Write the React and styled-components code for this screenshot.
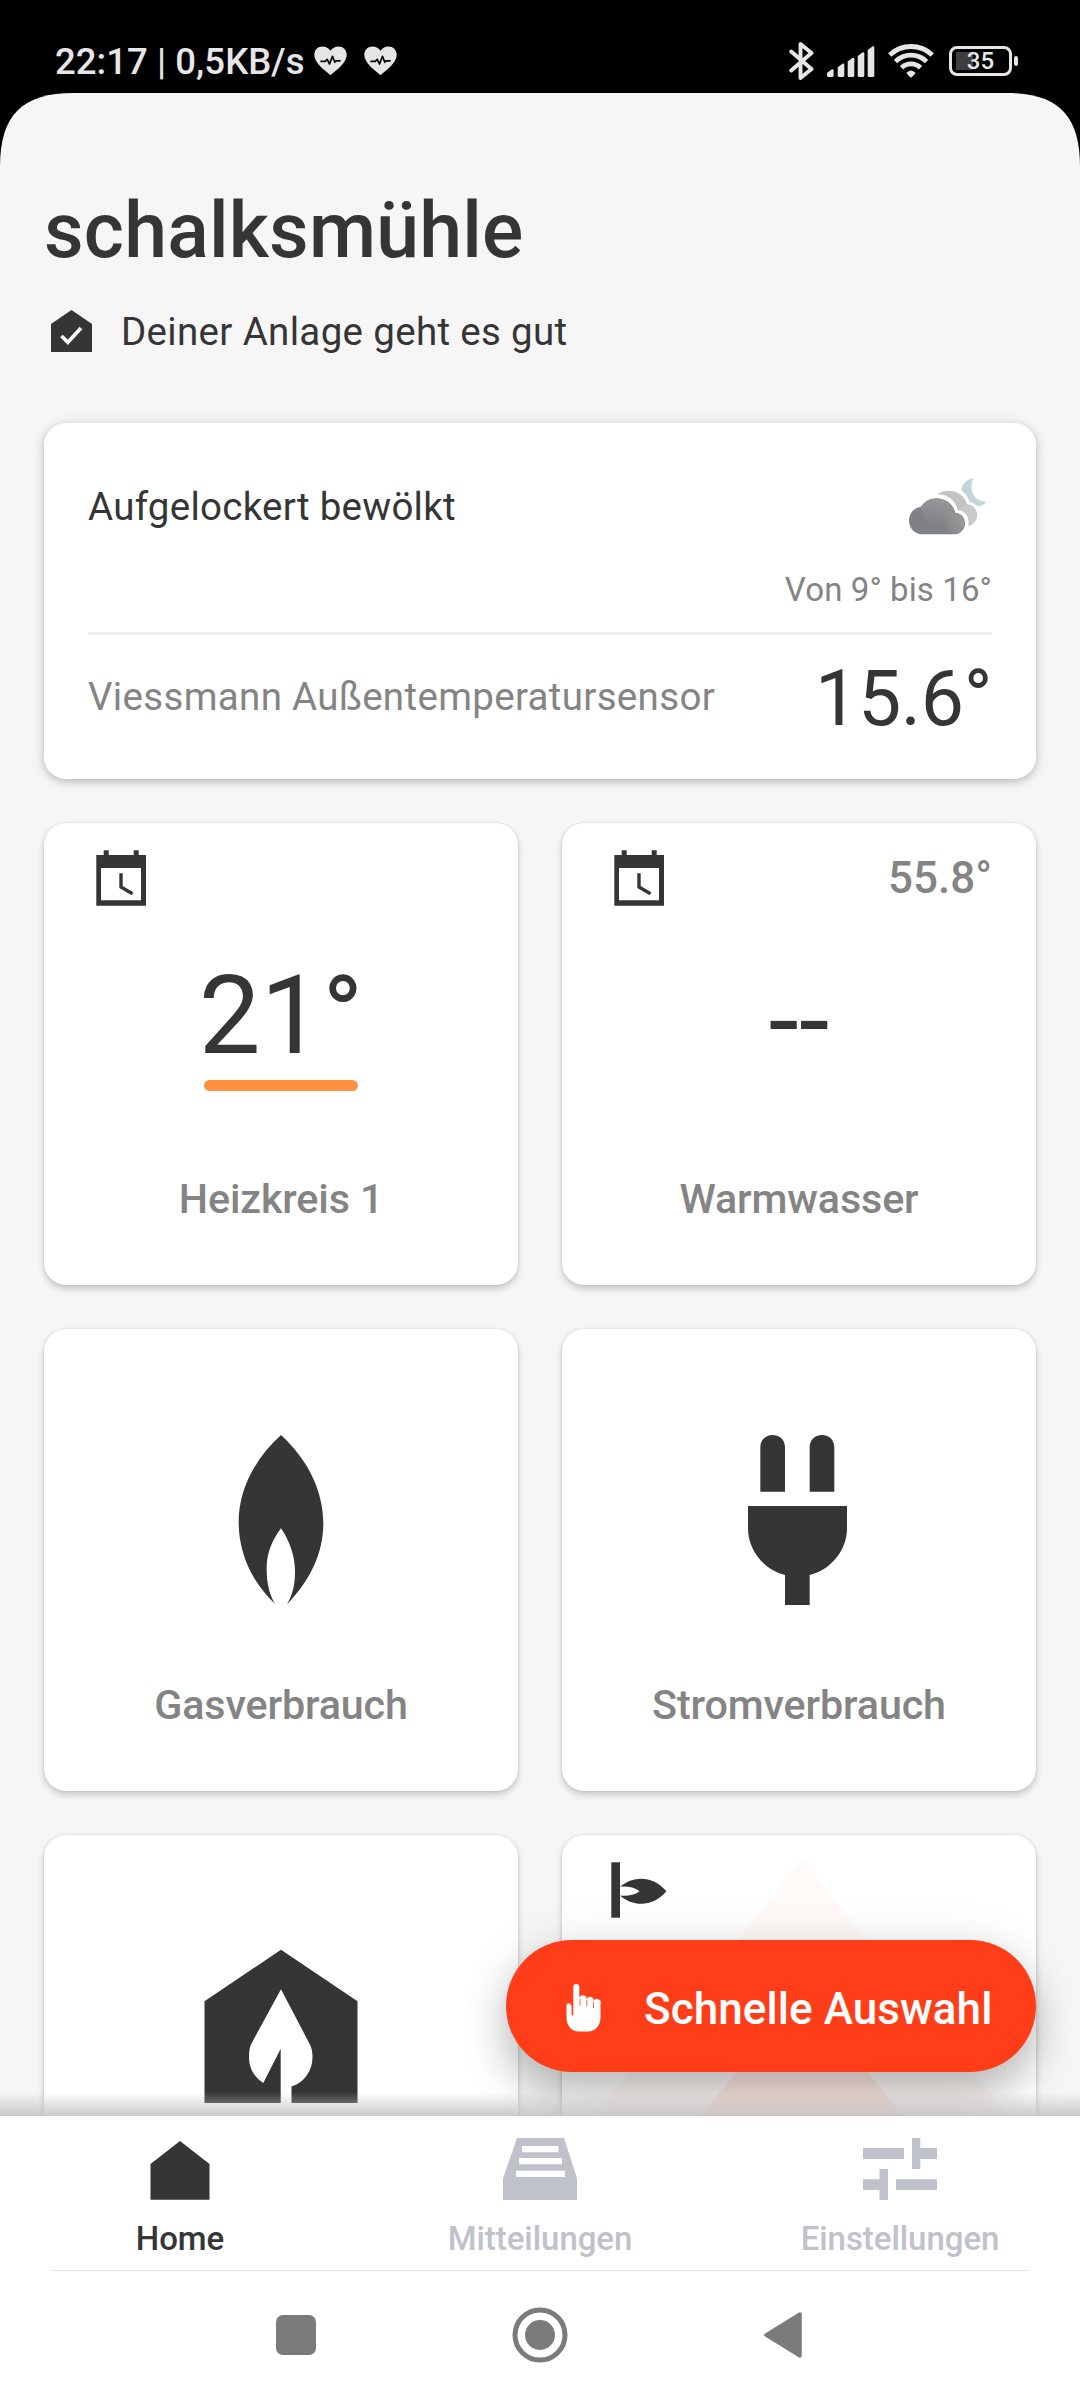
import React from "react";
import styled, { createGlobalStyle } from "styled-components";

const GlobalStyle = createGlobalStyle`
  *, *::before, *::after { box-sizing: border-box; }
  html, body { margin: 0; padding: 0; background: #000; }
  body { font-family: Roboto, "Noto Sans", sans-serif; color: #353535; }
  svg { display: block; flex: none; }
`;

const Screen = styled.div`
  position: relative;
  display: flex;
  flex-direction: column;
  width: 1080px;
  height: 2400px;
  overflow: hidden;
  background: #000;
`;

const StatusBar = styled.header`
  display: flex;
  justify-content: space-between;
  height: 93px;
  padding: 32px 62px 0 55px;
  color: #e6e6e6;
`;

const StatusGroup = styled.div`
  display: flex;
  align-items: center;
  height: 58px;
`;

const Clock = styled.span`
  font-size: 36.5px;
  font-weight: 500;
  line-height: 58px;
  letter-spacing: 0.06px;
  padding-top: 2px;
  margin-right: 9px;
  white-space: nowrap;
`;

const Hearts = styled.div`
  display: flex;
  gap: 17px;
`;

const Battery = styled.div`
  display: flex;
  align-items: center;
  gap: 2px;
  margin-left: 15px;
`;

const BatteryBody = styled.div`
  display: flex;
  align-items: center;
  justify-content: center;
  width: 63px;
  height: 30px;
  border: 3px solid #e6e6e6;
  border-radius: 8px;
  font-size: 24px;
  font-weight: 500;
  line-height: 24px;
  background: linear-gradient(#3e3e3e, #3e3e3e) 4px center / 17px 18px no-repeat;
`;

const BatteryTip = styled.div`
  width: 4px;
  height: 10px;
  border-radius: 2px;
  background: #e6e6e6;
`;

const Content = styled.main`
  position: relative;
  height: 2023px;
  overflow: hidden;
  padding: 93px 44px 0;
  background: #f6f6f6;
  clip-path: path("M0 74 C0 22 22 0 74 0 H1006 C1058 0 1080 22 1080 74 V2023 H0 Z");
`;

const Title = styled.h1`
  margin: 0;
  font-size: 77px;
  font-weight: 500;
  line-height: 90px;
  letter-spacing: 0.2px;
`;

const Health = styled.div`
  display: flex;
  align-items: center;
  gap: 29px;
  height: 50px;
  margin: 30px 0 67px;
  padding-left: 7px;
  font-size: 38.5px;
  letter-spacing: 0.33px;
`;

const HealthText = styled.span`
  padding-top: 1px;
`;

const Card = styled.section`
  border-radius: 22px;
  background: #fff;
  box-shadow: ${(p) =>
    p.$raised
      ? "0 1px 14px rgba(0,0,0,.12), 0 3px 7px rgba(0,0,0,.16)"
      : "0 0 3px rgba(0,0,0,.12), 0 4px 7px rgba(0,0,0,.18)"};
`;

const WeatherCard = styled(Card)`
  height: 356px;
  padding: 44px 44px 0;
`;

const WeatherNow = styled.div`
  display: flex;
  align-items: center;
  justify-content: space-between;
  height: 79px;
  padding-right: 5px;
  font-size: 38.5px;
  letter-spacing: 0.26px;
`;

const WeatherRange = styled.div`
  margin-top: 24px;
  font-size: 33px;
  line-height: 40px;
  letter-spacing: 0.1px;
  text-align: right;
  color: #848484;
`;

const Divider = styled.hr`
  height: 3px;
  margin: 22px 0 0;
  border: 0;
  background: #eee;
`;

const SensorRow = styled.div`
  display: flex;
  align-items: center;
  justify-content: space-between;
  height: 126px;
`;

const SensorName = styled.span`
  margin-bottom: 3px;
  font-size: 38.5px;
  letter-spacing: 0.33px;
  color: #848484;
`;

const SensorValue = styled.span`
  padding-top: 2px;
  font-size: 77px;
  line-height: 90px;
  letter-spacing: -0.4px;
`;

const Tiles = styled.div`
  display: grid;
  grid-template-columns: 474px 474px;
  grid-auto-rows: 462px;
  gap: 44px;
  margin-top: 44px;
`;

const Tile = styled(Card)`
  position: relative;
  display: flex;
  flex-direction: column;
`;

const TileHead = styled.div`
  position: relative;
  display: flex;
  align-items: center;
  justify-content: space-between;
  height: 88px;
  margin-bottom: 18px;
  padding: 22px 44px 0;
`;

const TileReading = styled.span`
  font-size: 44px;
  font-weight: 500;
  color: #848484;
`;

const TileBody = styled.div`
  display: flex;
  flex-direction: column;
  align-items: center;
  justify-content: center;
  height: 170px;
`;

const BigValue = styled.div`
  font-size: 110px;
  line-height: 120px;
  margin-top: ${(p) => (p.$alone ? "14px" : "19px")};
`;

const Underline = styled.div`
  width: 154px;
  height: 11px;
  margin-top: 4px;
  border-radius: 6px;
  background: #ff9141;
`;

const TileLabel = styled.div`
  margin-top: 76px;
  font-size: 41.25px;
  font-weight: 500;
  line-height: 48px;
  letter-spacing: -0.13px;
  text-align: center;
  color: #848484;
`;

const Watermark = styled.svg`
  position: absolute;
  left: 0;
  top: 0;
`;

const QuickButton = styled.button`
  position: absolute;
  left: 506px;
  top: 1940px;
  display: flex;
  align-items: center;
  width: 530px;
  height: 132px;
  padding: 4px 0 0 60px;
  border: 0;
  border-radius: 66px;
  background: #ff3e19;
  color: #fff;
  font: 500 44px/56px Roboto, "Noto Sans", sans-serif;
  white-space: nowrap;
  box-shadow: 0 26px 44px rgba(0, 0, 0, 0.22), 0 2px 48px rgba(0, 0, 0, 0.1);
`;

const QuickLabel = styled.span`
  margin-left: 42px;
  padding-top: 2px;
  letter-spacing: 0.08px;
`;

const BottomFade = styled.div`
  position: absolute;
  left: 0;
  right: 0;
  top: 2092px;
  height: 24px;
  background: linear-gradient(rgba(190, 190, 190, 0), rgba(190, 190, 190, 0.8));
`;

const Tabs = styled.nav`
  position: relative;
  display: grid;
  grid-template-columns: repeat(3, 1fr);
  height: 155px;
  background: #fff;

  &::after {
    content: "";
    position: absolute;
    left: 52px;
    right: 52px;
    bottom: 0;
    height: 1px;
    background: #e2e2e2;
  }
`;

const Tab = styled.div`
  display: flex;
  flex-direction: column;
  align-items: center;
  padding-top: 22px;
  font-size: 33px;
  font-weight: 500;
  line-height: 40px;
  letter-spacing: -0.05px;
  color: ${(p) => (p.$active ? "#353535" : "#bfc2ca")};

  svg { margin-bottom: 15px; }
`;

const SystemNav = styled.footer`
  display: flex;
  align-items: center;
  justify-content: center;
  height: 129px;
  gap: 196px;
  padding: 0 3px 2px 0;
  background: #fff;
`;

const HeartIcon = () => (
  <svg width="33" height="30" viewBox="0 0 33 30">
    <path d="M16.5 29.3 C10 23.5 .3 17 .3 8.8 C.3 4 4 .6 8.6 .6 C12 .6 14.7 2.3 16.5 4.8 C18.3 2.3 21 .6 24.4 .6 C29 .6 32.7 4 32.7 8.8 C32.7 17 23 23.5 16.5 29.3Z" fill="#e6e6e6" />
    <path d="M7 15.3 H11.5 L13.2 13.3 L15.5 18 L18.5 10.3 L20.8 16.3 L22 14.8 H26" fill="none" stroke="#000" strokeWidth="1.7" strokeLinejoin="round" strokeLinecap="round" />
  </svg>
);

const BluetoothIcon = () => (
  <svg width="25" height="40" viewBox="0 0 25 40">
    <path d="M2.2 10.5 L22.5 28 L11.5 37 V3 L22.5 12 L2.2 29.5" fill="none" stroke="#e6e6e6" strokeWidth="3.9" strokeLinejoin="round" strokeLinecap="round" />
  </svg>
);

const bars = [
  [0, 23], [10.7, 17.3], [20.7, 11.5], [30.7, 6], [40.7, 0],
];

const SignalSvg = styled.svg`
  margin-left: 13px;
`;

const SignalIcon = () => (
  <SignalSvg width="48" height="31" viewBox="0 0 48 31">
    {bars.map(([x, y]) => (
      <path key={x} d={`M${x} ${y + 4} L${x + 5} ${y + 0.3} Q${x + 6.6} ${y} ${x + 6.6} ${y + 1.5} V29.5 Q${x + 6.6} 31 ${x + 5} 31 H${x + 1.5} Q${x} 31 ${x} 29.5Z`} fill="#e6e6e6" />
    ))}
  </SignalSvg>
);

const WifiIcon = () => (
  <SignalSvg width="46" height="34" viewBox="0 0 46 34">
    <g fill="none" stroke="#e6e6e6" strokeWidth="4.8">
      <path d="M1.7 11 A31 31 0 0 1 44.3 11" />
      <path d="M7.5 17.6 A22 22 0 0 1 38.5 17.6" />
      <path d="M13.5 23.8 A13.5 13.5 0 0 1 32.5 23.8" />
    </g>
    <path d="M18.3 29 Q23 24 27.7 29 L23.8 33.2 Q23 34 22.2 33.2Z" fill="#e6e6e6" />
  </SignalSvg>
);

const HealthIcon = () => (
  <svg width="41" height="42" viewBox="0 0 41 42">
    <path d="M0 14 L20.5 0 L41 14 V42 H0Z" fill="#353535" />
    <path d="M10.5 26 L16.8 32.3 L30 18" fill="none" stroke="#fff" strokeWidth="3.6" />
  </svg>
);

const CloudyNightIcon = () => (
  <svg width="78" height="58" viewBox="927 203 234 174">
    <defs>
      <linearGradient id="puff" x1="0.7" y1="0" x2="0.4" y2="1">
        <stop offset="0" stopColor="#98999b" />
        <stop offset="1" stopColor="#808184" />
      </linearGradient>
      <linearGradient id="small" x1="1" y1="0.2" x2="0" y2="0.8">
        <stop offset="0" stopColor="#9b9c9e" />
        <stop offset="1" stopColor="#828386" />
      </linearGradient>
    </defs>
    <path d="M1121 204 C1105 232 1118 276 1160 273 C1152 283 1144 287 1134 289 C1127 282 1119 277 1109 275 C1104 262 1096 249 1084 240 C1086 221 1100 207 1121 204Z" fill="#c2d6da" />
    <path d="M1011 252 C1048 228 1092 247 1101 282 C1119 284 1131 298 1131 315 C1131 330 1121 342 1105 347 C1111 322 1098 301 1073 299 C1066 270 1044 252 1011 252Z" fill="#c3c3c3" />
    <path d="M1101 282 C1119 284 1131 298 1131 315 C1131 330 1121 342 1105 347 C1111 322 1098 301 1073 299 Z" fill="#cacaca" />
    <path d="M968 372 C945 372 927 354 927 331 C927 309 942 292 963 290 C973 273 990 264 1010 264 C1038 264 1060 283 1066 307 C1083 308 1095 322 1095 339 C1095 358 1081 372 1063 372Z" fill="#808184" />
    <path d="M963 290 C973 273 990 265 1010 265 C1037 265 1058 283 1064 308 C1044 311 1031 325 1031 345 L998 345 C975 337 962 313 963 290Z" fill="url(#puff)" />
    <circle cx="1063" cy="339" r="31" fill="url(#small)" />
  </svg>
);

const ScheduleIcon = () => (
  <svg width="66" height="66" viewBox="0 0 66 66">
    <path d="M15.7 5.3 H20.7 V10 H45.7 V5.3 H50.7 V10 H58 V60.7 H8.3 V10 H15.7Z M13 23 V55.3 H53 V23Z" fill="#353535" fillRule="evenodd" />
    <path d="M33 28.3 V42 L44.5 48.7" fill="none" stroke="#353535" strokeWidth="3.4" />
  </svg>
);

const GasIcon = () => (
  <svg width="86" height="170" viewBox="624 375 258 510">
    <path d="M753 375 C835 450 880 545 880 640 C880 730 840 812 771 883 C790 850 795 820 795 785 C795 740 780 695 753 655 C723 695 710 735 710 775 C710 820 718 855 736 883 C665 815 626 730 626 635 C626 545 670 450 753 375Z" fill="#353535" />
  </svg>
);

const PlugIcon = () => (
  <svg width="102" height="170" viewBox="624 375 306 510">
    <path d="M661 545 V412 C661 363 735 363 735 412 V545Z M809 545 V412 C809 363 883 363 883 412 V545Z M624 588 H921 V655 C921 722 872 780 809 795 V885 H735 V795 C673 780 624 722 624 655Z" fill="#353535" />
  </svg>
);

const EcoHouseIcon = () => (
  <svg width="154" height="154" viewBox="0 -0.7 154 154">
    <path d="M0.5 51.5 L77 0 L153.5 51.5 V153.3 H87.5 V136.7 C100 133 108.5 121 108.5 107.5 C108.5 102 107.5 97.5 105.5 94 L77 39.5 L46.8 95 C45.6 98 45 102.5 45 107.5 C45 118.5 50.5 128 59.3 133.3 L76.7 99 V153.3 H0.5Z" fill="#353535" />
  </svg>
);

const BurnerIcon = () => (
  <svg width="66" height="66" viewBox="0 0 66 66">
    <path d="M5.3 5.3 H14 V60.7 H5.3Z" fill="#353535" />
    <path d="M14 29.8 C27 18.5 47 18 60.4 34.3 C47 50.5 27 50 14 38.5 C20 39.3 28 38.5 33.6 34.2 C28 30 20 29 14 29.8Z" fill="#353535" />
  </svg>
);

const HandIcon = () => (
  <svg width="36" height="48" viewBox="0 0 36 48">
    <path d="M7.3 3 A3 3 0 0 1 13.3 3 V14.5 A2.6 2.6 0 0 1 20.6 15.3 A2.7 2.7 0 0 1 27.3 17.5 A3.2 3.2 0 0 1 34.5 20 V33 C34.5 41 30 47.5 22 47.5 H13 C5 47.5 .5 41 .5 34 V21.5 C.5 18 5 19 5.6 22.5 V30 Q5.6 31.5 7.3 31.5Z" fill="#fff" />
    <path d="M14 15 V21.5 M20.8 16 V22.5 M27.5 18 V24" stroke="#ff3e19" strokeWidth="0.8" fill="none" />
  </svg>
);

const HomeIcon = () => (
  <svg width="74" height="66" viewBox="0 0 74 66">
    <path d="M7.5 26 L37 3 L66.5 26 V61.7 H7.5Z" fill="currentColor" />
  </svg>
);

const InboxIcon = () => (
  <svg width="74" height="66" viewBox="0 0 74 66">
    <path d="M14 0 H61 L74 40.3 V62 H0 V40.3Z M19 8 V14.3 H55.5 V8Z M16 20 V26.3 H59 V20Z M13 32.7 V39 H62 V32.7Z" fill="currentColor" fillRule="evenodd" />
  </svg>
);

const SettingsIcon = () => (
  <svg width="74" height="66" viewBox="0 0 74 66">
    <path d="M0 10 H41 V21 H0Z M49 0 H57.3 V10 H74 V21 H57.3 V31 H49Z M0 41.3 H16.5 V31 H25 V62 H16.5 V52 H0Z M33 41.3 H74 V52 H33Z" fill="currentColor" />
  </svg>
);

const tiles = [
  { label: "Heizkreis 1", icon: <ScheduleIcon />, value: "21°", underlined: true },
  { label: "Warmwasser", icon: <ScheduleIcon />, reading: "55.8°", value: "--" },
  { label: "Gasverbrauch", art: <GasIcon /> },
  { label: "Stromverbrauch", art: <PlugIcon /> },
  { art: <EcoHouseIcon /> },
  { icon: <BurnerIcon />, watermark: true },
];

const TileWatermark = () => (
  <Watermark width="474" height="330" viewBox="0 0 474 330">
    <path d="M240 25 L487 330 H-7Z" fill="#fff9f7" />
    <path d="M240 156 L381 330 H99Z" fill="#ffebe7" />
  </Watermark>
);

export default function App() {
  return (
    <Screen>
      <GlobalStyle />
      <StatusBar>
        <StatusGroup>
          <Clock>22:17 | 0,5KB/s</Clock>
          <Hearts>
            <HeartIcon />
            <HeartIcon />
          </Hearts>
        </StatusGroup>
        <StatusGroup>
          <BluetoothIcon />
          <SignalIcon />
          <WifiIcon />
          <Battery>
            <BatteryBody>35</BatteryBody>
            <BatteryTip />
          </Battery>
        </StatusGroup>
      </StatusBar>

      <Content>
        <Title>schalksmühle</Title>
        <Health>
          <HealthIcon />
          <HealthText>Deiner Anlage geht es gut</HealthText>
        </Health>

        <WeatherCard $raised>
          <WeatherNow>
            <span>Aufgelockert bewölkt</span>
            <CloudyNightIcon />
          </WeatherNow>
          <WeatherRange>Von 9° bis 16°</WeatherRange>
          <Divider />
          <SensorRow>
            <SensorName>Viessmann Außentemperatursensor</SensorName>
            <SensorValue>15.6°</SensorValue>
          </SensorRow>
        </WeatherCard>

        <Tiles>
          {tiles.map((t, i) => (
            <Tile key={i}>
              {t.watermark && <TileWatermark />}
              <TileHead>
                {t.icon}
                {t.reading && <TileReading>{t.reading}</TileReading>}
              </TileHead>
              <TileBody>
                {t.art}
                {t.value && <BigValue $alone={!t.underlined}>{t.value}</BigValue>}
                {t.underlined && <Underline />}
              </TileBody>
              {t.label && <TileLabel>{t.label}</TileLabel>}
            </Tile>
          ))}
        </Tiles>
      </Content>

      <QuickButton>
        <HandIcon />
        <QuickLabel>Schnelle Auswahl</QuickLabel>
      </QuickButton>
      <BottomFade />

      <Tabs>
        <Tab $active>
          <HomeIcon />
          Home
        </Tab>
        <Tab>
          <InboxIcon />
          Mitteilungen
        </Tab>
        <Tab>
          <SettingsIcon />
          Einstellungen
        </Tab>
      </Tabs>

      <SystemNav>
        <svg width="40" height="40" viewBox="0 0 40 40">
          <rect width="40" height="40" rx="7" fill="#7b7b7b" />
        </svg>
        <svg width="56" height="56" viewBox="0 0 56 56">
          <circle cx="28" cy="28" r="25" fill="none" stroke="#7b7b7b" strokeWidth="5" />
          <circle cx="28" cy="28" r="15" fill="#7b7b7b" />
        </svg>
        <svg width="38" height="46" viewBox="0 0 38 46">
          <path d="M2 23 L36 2 V44Z" fill="#7b7b7b" stroke="#7b7b7b" strokeWidth="3.5" strokeLinejoin="round" />
        </svg>
      </SystemNav>
    </Screen>
  );
}
